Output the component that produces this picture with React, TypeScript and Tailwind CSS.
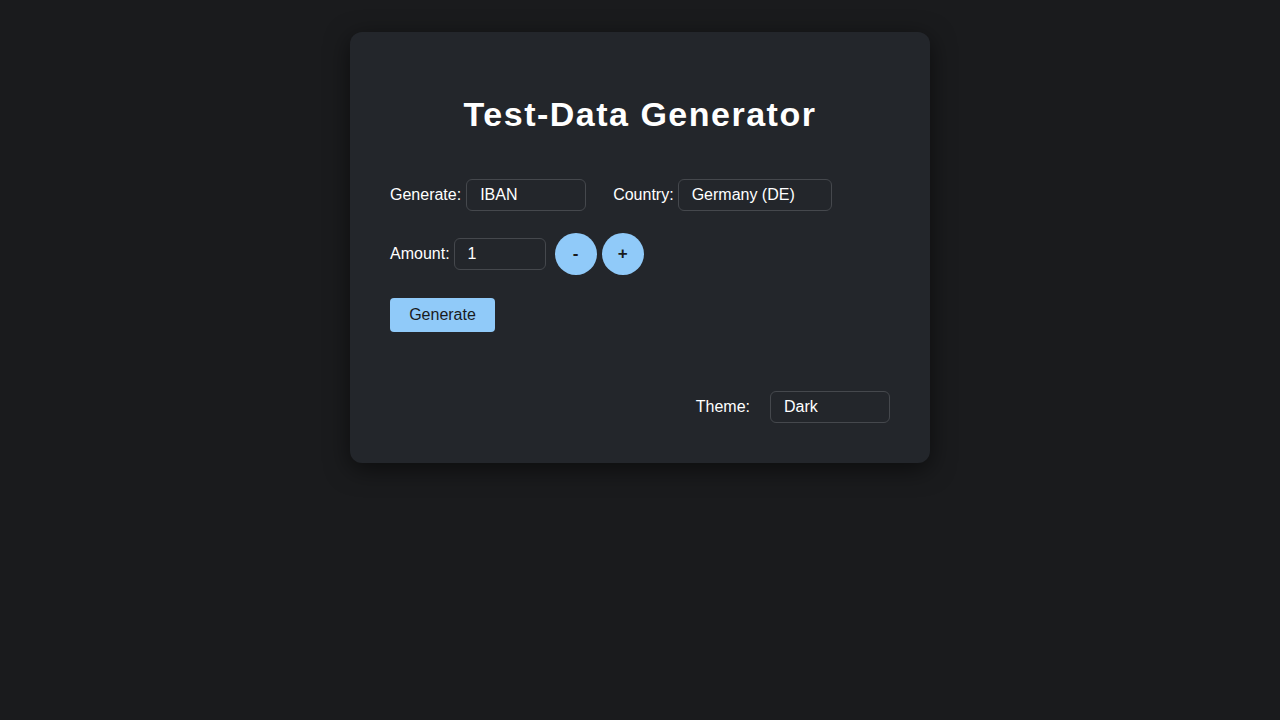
import React from 'react';

function Field({ value, width }: { value: string; width: string }) {
  return (
    <div className={`${width} h-8 flex items-center pl-[13px] rounded-md border border-[#45484d] bg-[#23262b] text-white text-base`}>
      {value}
    </div>
  );
}

export default function App() {
  return (
    <div className="min-h-screen bg-[#1a1b1d] pt-8 font-['Liberation_Sans',Arial,sans-serif]">
      <div className="mx-auto w-[580px] rounded-xl bg-[#23262b] p-10 shadow-[0_6px_24px_rgba(0,0,0,0.55)]">
        <h1 className="mt-[22px] text-center text-[34px] leading-[40px] font-bold tracking-[1.5px] text-white">
          Test-Data Generator
        </h1>

        <div className="mt-[45px] flex items-center text-white text-base">
          <span>Generate:</span>
          <div className="ml-[5px]">
            <Field value="IBAN" width="w-[120px]" />
          </div>
          <span className="ml-[27px]">Country:</span>
          <div className="ml-[4px]">
            <Field value="Germany (DE)" width="w-[154px]" />
          </div>
        </div>

        <div className="mt-[22px] flex items-center text-white text-base">
          <span>Amount:</span>
          <div className="ml-[4px]">
            <Field value="1" width="w-[92px]" />
          </div>
          <button className="ml-[9px] w-[42px] h-[42px] rounded-full bg-[#90caf9] text-[#1a1b1d] text-[17px] font-bold">-</button>
          <button className="ml-[5px] w-[42px] h-[42px] rounded-full bg-[#90caf9] text-[#1a1b1d] text-[17px] font-bold">+</button>
        </div>

        <div className="mt-[23px]">
          <button className="w-[105px] h-[34px] rounded bg-[#90caf9] text-[#1a1b1d] text-base">Generate</button>
        </div>

        <div className="mt-[59px] flex items-center justify-end text-white text-base">
          <span>Theme:</span>
          <div className="ml-5">
            <Field value="Dark" width="w-[120px]" />
          </div>
        </div>
      </div>
    </div>
  );
}
